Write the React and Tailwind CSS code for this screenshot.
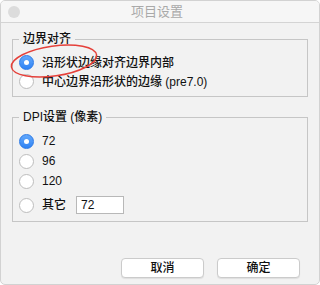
import React from "react"

const font = { fontFamily: '"Liberation Sans", "Noto Sans CJK SC", sans-serif' }

const Radio = ({ checked }) => (
	checked ? (
		<div className="w-[15px] h-[15px] rounded-full bg-gradient-to-b from-[#62a8fb] to-[#2f83f4] border border-[#2c7ae6] flex items-center justify-center shrink-0">
			<div className="w-[5px] h-[5px] rounded-full bg-white"></div>
		</div>
	) : (
		<div className="w-[15px] h-[15px] rounded-full bg-white border border-[#bdbdbd] shrink-0"></div>
	)
)

const Row = ({ checked, children, className = "h-[19px]" }) => (
	<div className={`flex items-center gap-[8px] ${className}`}>
		<Radio checked={checked} />
		<span className="text-[12px] leading-[16px] font-medium text-[#111]">{children}</span>
	</div>
)

export default function App() {
	return (
		<div className="w-[320px] h-[285px] bg-white" style={font}>
			<div className="relative w-[320px] h-[285px] bg-[#f2f2f2] rounded-[5px] border border-[#d2d2d2] overflow-hidden">
				{/* title bar */}
				<div className="relative h-[22px] bg-[#f6f6f6] border-b border-[#d4d4d4] flex items-center justify-center">
					<div className="absolute left-[7px] top-[5px] w-[12px] h-[12px] rounded-full bg-[#dcdcdc]"></div>
					<span className="text-[13px] text-[#a9a9a9] -ml-[6px]">项目设置</span>
				</div>

				<fieldset className="ml-[11px] mt-[8px] w-[296px] border border-[#c6c6c6] px-[6px] pt-[6px] pb-[5px]">
					<legend className="px-[4px] text-[12px] leading-[16px] font-medium text-[#111]">边界对齐</legend>
					<Row checked>沿形状边缘对齐边界内部</Row>
					<Row>中心边界沿形状的边缘 (pre7.0)</Row>
				</fieldset>

				<fieldset className="ml-[11px] mt-[12px] w-[296px] border border-[#c6c6c6] px-[6px] pt-[6px] pb-[5px]">
					<legend className="px-[4px] text-[12px] leading-[16px] font-medium text-[#111]">DPI设置 (像素)</legend>
					<Row checked className="h-[20px]">72</Row>
					<Row className="h-[20px]">96</Row>
					<Row className="h-[20px]">120</Row>
					<div className="flex items-center gap-[8px] h-[22px] mt-[3px]">
						<Radio />
						<span className="text-[12px] leading-[16px] font-medium text-[#111]">其它</span>
						<div className="ml-[2px] w-[48px] h-[18px] bg-white border border-[#b8b8b8] flex items-center pl-[4px] text-[12px] font-medium text-[#111]">72</div>
					</div>
				</fieldset>

				<div className="flex justify-end gap-[13px] pr-[19px] mt-[36px]">
					<button className="w-[83px] h-[20px] bg-white border border-[#cbcbcb] rounded-[4px] shadow-[0_1px_1px_rgba(0,0,0,0.08)] text-[12px] font-medium text-[#111]">取消</button>
					<button className="w-[83px] h-[20px] bg-white border border-[#cbcbcb] rounded-[4px] shadow-[0_1px_1px_rgba(0,0,0,0.08)] text-[12px] font-medium text-[#111]">确定</button>
				</div>

				{/* red annotation circle */}
				<svg className="absolute left-0 top-0 pointer-events-none" width="120" height="90" viewBox="0 0 120 90">
					<ellipse cx="53" cy="60" rx="43" ry="15" transform="rotate(-8 53 60)" fill="none" stroke="#e5403a" strokeWidth="1.5" />
				</svg>
			</div>
		</div>
	)
}
